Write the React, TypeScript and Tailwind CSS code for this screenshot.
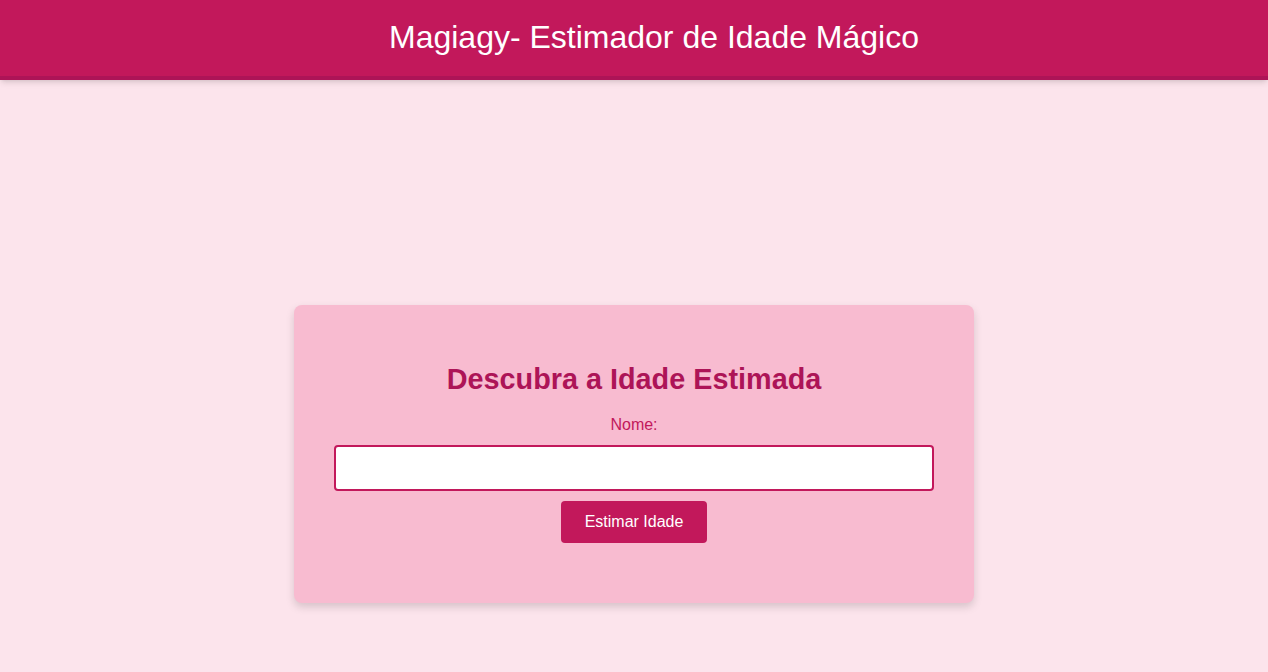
import React from 'react';

const App: React.FC = () => {
  return (
    <div className="min-h-screen bg-[#fce4ec] font-['Liberation_Sans',Arial,sans-serif]">
      <header className="h-[80px] bg-[#c2185b] border-b-4 border-[#ad1457] shadow-md flex items-center justify-center pl-10 pb-[2px]">
        <h1 className="text-[32px] leading-[37px] text-white">Magiagy- Estimador de Idade Mágico</h1>
      </header>

      <main className="flex justify-center pt-[225px] pb-[69px]">
        <div className="w-[680px] bg-[#f8bbd0] rounded-lg shadow-[0_4px_8px_rgba(0,0,0,0.15)] flex flex-col items-center pt-[58px] pb-[60px] px-10">
          <h2 className="text-[28.8px] leading-[32px] font-bold text-[#ad1457]">Descubra a Idade Estimada</h2>
          <label htmlFor="nome" className="mt-[21px] text-base leading-[18px] text-[#c2185b]">Nome:</label>
          <input
            id="nome"
            type="text"
            className="mt-[11px] w-[600px] h-[46px] bg-white border-2 border-[#c2185b] rounded px-2 outline-none"
          />
          <button className="mt-[10px] w-[146px] h-[42px] bg-[#c2185b] rounded text-white text-base">
            Estimar Idade
          </button>
        </div>
      </main>
    </div>
  );
};

export default App;
